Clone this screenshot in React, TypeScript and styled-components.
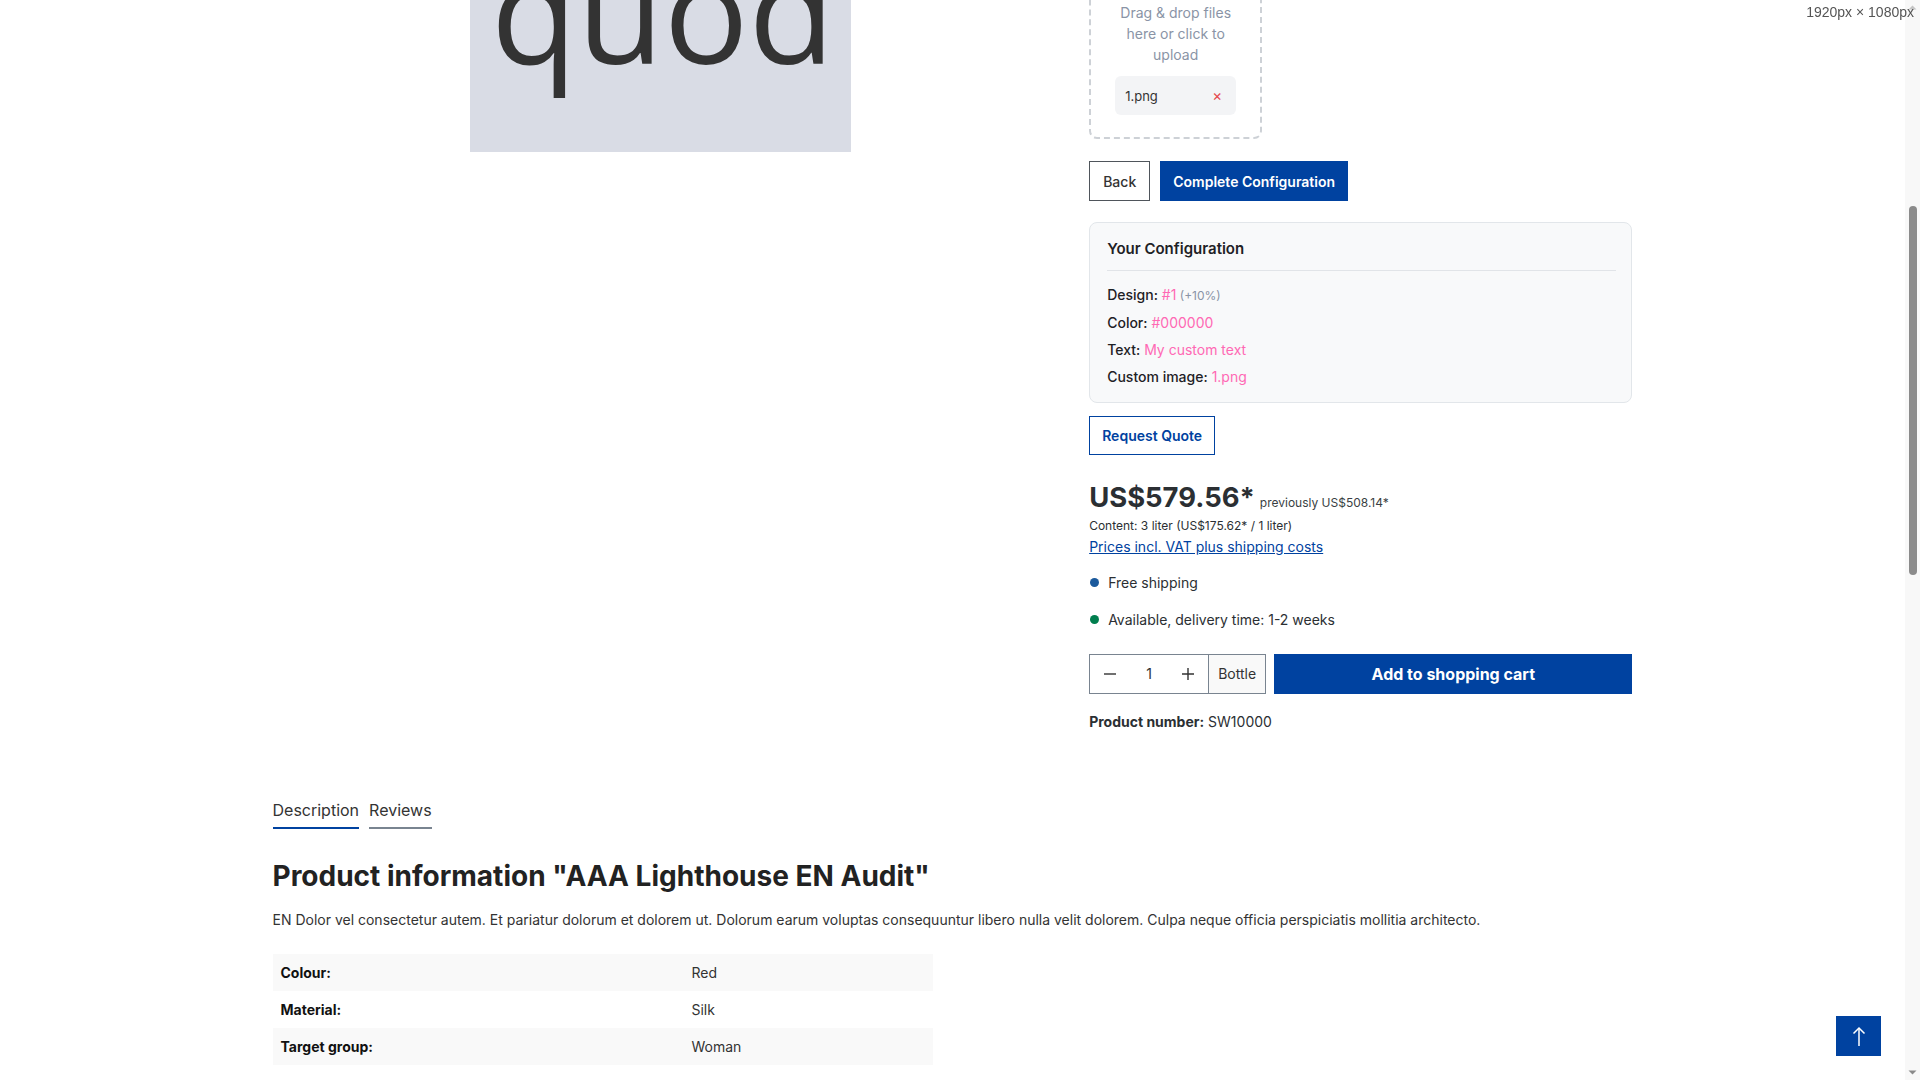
import React from "react";
import styled, { createGlobalStyle } from "styled-components";

const brand = "#0042a0";
const pink = "#ff69b4";
const text = "#2b2f33";

const GlobalStyle = createGlobalStyle`
  html, body {
    margin: 0;
    padding: 0;
    height: 100%;
  }
  body {
    font-family: Inter, "Noto Sans", Arial, sans-serif;
    font-size: 14px;
    color: ${text};
    background: #fff;
    overflow: hidden;
  }
  *, *::before, *::after {
    box-sizing: border-box;
  }
`;

const Viewport = styled.div`
  display: flex;
  height: 100vh;
  overflow: hidden;
`;

const Page = styled.main`
  flex: 1;
  min-width: 0;
  overflow: hidden;
`;

/* the page is scrolled a little past the top of the product block */
const ScrollContent = styled.div`
  margin-top: -72px;
`;

const Container = styled.div`
  max-width: 1400px;
  margin: 0 auto;
  padding: 0 20px;
`;

const ProductRow = styled.div`
  display: flex;
  margin: 0 -20px;
`;

const GalleryColumn = styled.div`
  flex: 0 0 58.3333%;
  padding: 0 20px;
  display: flex;
  justify-content: center;
  align-items: flex-start;
`;

const GalleryImage = styled.div`
  width: 381px;
  height: 224px;
  background: #d9dce5;
  display: flex;
  align-items: flex-end;
  justify-content: center;
  padding-bottom: 72px;
`;

const ImageWord = styled.span`
  font-family: "Open Sans", "Noto Sans", sans-serif;
  font-size: 141px;
  line-height: 1;
  color: #333;
  padding-left: 4px;
`;

const BuyColumn = styled.div`
  flex: 0 0 41.6667%;
  padding: 0 20px;
  display: flex;
  flex-direction: column;
  align-items: flex-start;
`;

const UploadZone = styled.div`
  width: 173px;
  border: 2px dashed #cdd1d6;
  border-radius: 8px;
  padding: 23px 24px 22px;
  display: flex;
  flex-direction: column;
  align-items: center;
`;

const UploadHint = styled.p`
  margin: 13px 0 0;
  font-size: 14px;
  line-height: 21px;
  color: #8a94a6;
  text-align: center;
`;

const FileChip = styled.div`
  margin-top: 11px;
  width: 100%;
  height: 39px;
  padding: 0 10px;
  border-radius: 6px;
  background: #f3f4f6;
  display: flex;
  align-items: center;
  justify-content: space-between;
  font-size: 13px;
  color: #333;
`;

const RemoveFile = styled.span`
  color: #e5484d;
  font-size: 15px;
  line-height: 1;
  padding-right: 4px;
`;

const ActionRow = styled.div`
  margin-top: 22px;
  display: flex;
  gap: 10px;
`;

type ButtonVariant = "outline" | "primary" | "quote";

const Button = styled.button<{ $variant: ButtonVariant }>`
  height: 40px;
  padding: 0 ${({ $variant }) => ($variant === "outline" ? 13 : 12)}px;
  font-family: inherit;
  font-size: 14px;
  font-weight: ${({ $variant }) => ($variant === "outline" ? 500 : 600)};
  border: 1px solid
    ${({ $variant }) => ($variant === "outline" ? "#4f555b" : brand)};
  background: ${({ $variant }) => ($variant === "primary" ? brand : "#fff")};
  color: ${({ $variant }) =>
    $variant === "primary" ? "#fff" : $variant === "quote" ? brand : "#333"};
  cursor: pointer;
`;

const ConfigCard = styled.section`
  margin-top: 21px;
  align-self: stretch;
  border: 1px solid #e2e6ea;
  border-radius: 8px;
  background: #f8f9fa;
  padding: 15px 15px 15px 17px;
`;

const ConfigTitle = styled.h3`
  margin: 0;
  font-size: 15px;
  font-weight: 600;
  line-height: 20px;
  color: #1e2125;
  padding: 1px 0 11px;
  border-bottom: 1px solid #e1e4e8;
`;

const ConfigList = styled.ul`
  list-style: none;
  margin: 13px 0 0;
  padding: 0;
  display: flex;
  flex-direction: column;
  gap: 6px;
`;

const ConfigItem = styled.li`
  font-size: 14px;
  line-height: 21px;
  color: ${pink};

  & > b {
    font-weight: 500;
    color: #1e2125;
  }
`;

const ConfigNote = styled.span`
  font-size: 12px;
  color: #8a94a6;
`;

const QuoteButton = styled(Button)`
  margin-top: 13px;
  height: 39px;
`;

const PriceLine = styled.div`
  margin-top: 26px;
  display: flex;
  align-items: baseline;
  gap: 5px;
`;

const Price = styled.span`
  font-size: 27.4px;
  font-weight: 700;
  line-height: 1.2;
  color: ${text};
`;

const OldPrice = styled.span`
  font-size: 12px;
  color: #3a3f44;
`;

const UnitPrice = styled.div`
  margin-top: 2px;
  font-size: 12px;
  line-height: 20px;
`;

const TaxLink = styled.a`
  font-size: 14px;
  line-height: 21px;
  color: ${brand};
  text-decoration: underline;
`;

const DeliveryList = styled.div`
  margin-top: 15px;
  display: flex;
  flex-direction: column;
  gap: 16px;
`;

const DeliveryItem = styled.div`
  display: flex;
  align-items: center;
  gap: 9px;
  font-size: 14px;
  line-height: 21px;
`;

const Dot = styled.span<{ $color: string }>`
  width: 9px;
  height: 9px;
  border-radius: 50%;
  background: ${({ $color }) => $color};
  margin-left: 1px;
`;

const BuyRow = styled.div`
  margin-top: 24px;
  align-self: stretch;
  display: flex;
  gap: 8px;
`;

const QuantityBox = styled.div`
  display: flex;
  height: 40px;
  border: 1px solid #798490;
`;

const QtyButton = styled.button`
  width: 40px;
  border: 0;
  background: #fff;
  display: flex;
  align-items: center;
  justify-content: center;
  padding: 0;
`;

const QtyValue = styled.span`
  width: 38px;
  display: flex;
  align-items: center;
  justify-content: center;
  font-size: 14px;
`;

const UnitLabel = styled.span`
  width: 57px;
  border-left: 1px solid #798490;
  background: #f9f9f9;
  display: flex;
  align-items: center;
  justify-content: center;
  font-size: 14px;
  color: #333;
`;

const CartButton = styled.button`
  flex: 1;
  height: 40px;
  border: 0;
  background: ${brand};
  color: #fff;
  font-family: inherit;
  font-size: 16px;
  font-weight: 700;
`;

const ProductNumber = styled.div`
  margin-top: 17px;
  font-size: 14px;
  line-height: 21px;

  & > b {
    font-weight: 700;
  }
`;

const TabsSection = styled.section`
  margin-top: 66px;
`;

const TabList = styled.div`
  display: flex;
  gap: 10px;
`;

const Tab = styled.span<{ $active?: boolean }>`
  font-size: 16px;
  line-height: 24px;
  color: #333;
  padding-bottom: 5px;
  border-bottom: 2px solid ${({ $active }) => ($active ? brand : "#798490")};
`;

const TabTitle = styled.h2`
  margin: 31px 0 0;
  font-size: 28px;
  font-weight: 700;
  line-height: 1.2;
  color: #222;
`;

const DescriptionText = styled.p`
  margin: 16px 0 0;
  font-size: 14px;
  line-height: 21px;
  color: #333;
`;

const PropertyTable = styled.div`
  margin-top: 24px;
  width: 660px;
`;

const PropertyRow = styled.div<{ $striped: boolean }>`
  display: grid;
  grid-template-columns: 411px 1fr;
  height: 37px;
  align-items: center;
  background: ${({ $striped }) => ($striped ? "#f9f9f9" : "#fff")};
  font-size: 14px;
`;

const PropertyLabel = styled.span`
  padding-left: 8px;
  font-weight: 700;
  color: #111;
`;

const PropertyValue = styled.span`
  padding-left: 8px;
  color: #333;
`;

const ScrollTrack = styled.div`
  width: 15px;
  flex: 0 0 15px;
  background: #f8f8f8;
  display: flex;
  flex-direction: column;
  align-items: center;
`;

const ScrollThumb = styled.div`
  margin-top: 192px;
  width: 8px;
  height: 369px;
  border-radius: 4px;
  background: #8b8b8b;
`;

const ScrollSpacer = styled.div`
  flex: 1;
`;

const BackToTop = styled.button`
  position: fixed;
  right: 39px;
  bottom: 24px;
  width: 45px;
  height: 40px;
  border: 0;
  background: ${brand};
  display: flex;
  align-items: center;
  justify-content: center;
  padding: 0;
`;

const SizeLabel = styled.span`
  position: fixed;
  top: 4px;
  right: 6px;
  font-family: "Liberation Sans", Arial, sans-serif;
  font-size: 14px;
  color: #555;
`;

const configItems = [
  { label: "Design", value: "#1", note: "(+10%)" },
  { label: "Color", value: "#000000" },
  { label: "Text", value: "My custom text" },
  { label: "Custom image", value: "1.png" },
];

const properties = [
  { label: "Colour:", value: "Red" },
  { label: "Material:", value: "Silk" },
  { label: "Target group:", value: "Woman" },
];

const UploadIcon = () => (
  <svg width="36" height="36" viewBox="0 0 24 24" fill="none" stroke="#8a94a6" strokeWidth="1.5" strokeLinecap="round" strokeLinejoin="round">
    <path d="M7 18a4.5 4.5 0 0 1-.5-9A6 6 0 0 1 18 8a4 4 0 0 1 0 10" />
    <path d="M12 12v8M9 15l3-3 3 3" />
  </svg>
);

const MinusIcon = () => (
  <svg width="14" height="14" viewBox="0 0 14 14">
    <path d="M1 7h12" stroke="#333" strokeWidth="1.4" />
  </svg>
);

const PlusIcon = () => (
  <svg width="14" height="14" viewBox="0 0 14 14">
    <path d="M1 7h12M7 1v12" stroke="#333" strokeWidth="1.4" />
  </svg>
);

const ArrowUpIcon = () => (
  <svg width="14" height="21" viewBox="0 0 14 21" fill="none" stroke="#fff" strokeWidth="1.5">
    <path d="M7 20V2" />
    <path d="M1.5 7.5 7 2l5.5 5.5" />
  </svg>
);

const ScrollArrow = ({ up }: { up?: boolean }) => (
  <svg width="9" height="14" viewBox="0 0 9 14">
    {up ? (
      <path d="M0.5 9.5 4.5 5.5 8.5 9.5Z" fill="#c4c4c4" />
    ) : (
      <path d="M0.5 4.5 4.5 8.5 8.5 4.5Z" fill="#8a8a8a" />
    )}
  </svg>
);

export default function App() {
  return (
    <>
      <GlobalStyle />
      <Viewport>
        <Page>
          <ScrollContent>
            <Container>
              <ProductRow>
                <GalleryColumn>
                  <GalleryImage>
                    <ImageWord>quod</ImageWord>
                  </GalleryImage>
                </GalleryColumn>

                <BuyColumn>
                  <UploadZone>
                    <UploadIcon />
                    <UploadHint>Drag &amp; drop files here or click to upload</UploadHint>
                    <FileChip>
                      <span>1.png</span>
                      <RemoveFile>×</RemoveFile>
                    </FileChip>
                  </UploadZone>

                  <ActionRow>
                    <Button $variant="outline">Back</Button>
                    <Button $variant="primary">Complete Configuration</Button>
                  </ActionRow>

                  <ConfigCard>
                    <ConfigTitle>Your Configuration</ConfigTitle>
                    <ConfigList>
                      {configItems.map((item) => (
                        <ConfigItem key={item.label}>
                          <b>{item.label}:</b> {item.value}
                          {item.note && <ConfigNote> {item.note}</ConfigNote>}
                        </ConfigItem>
                      ))}
                    </ConfigList>
                  </ConfigCard>

                  <QuoteButton $variant="quote">Request Quote</QuoteButton>

                  <PriceLine>
                    <Price>US$579.56*</Price>
                    <OldPrice>previously US$508.14*</OldPrice>
                  </PriceLine>
                  <UnitPrice>Content: 3 liter (US$175.62* / 1 liter)</UnitPrice>
                  <TaxLink href="#">Prices incl. VAT plus shipping costs</TaxLink>

                  <DeliveryList>
                    <DeliveryItem>
                      <Dot $color="#1b5a9c" />
                      Free shipping
                    </DeliveryItem>
                    <DeliveryItem>
                      <Dot $color="#007e4e" />
                      Available, delivery time: 1-2 weeks
                    </DeliveryItem>
                  </DeliveryList>

                  <BuyRow>
                    <QuantityBox>
                      <QtyButton aria-label="Decrease">
                        <MinusIcon />
                      </QtyButton>
                      <QtyValue>1</QtyValue>
                      <QtyButton aria-label="Increase">
                        <PlusIcon />
                      </QtyButton>
                      <UnitLabel>Bottle</UnitLabel>
                    </QuantityBox>
                    <CartButton>Add to shopping cart</CartButton>
                  </BuyRow>

                  <ProductNumber>
                    <b>Product number:</b> SW10000
                  </ProductNumber>
                </BuyColumn>
              </ProductRow>

              <TabsSection>
                <TabList>
                  <Tab $active>Description</Tab>
                  <Tab>Reviews</Tab>
                </TabList>
                <TabTitle>Product information "AAA Lighthouse EN Audit"</TabTitle>
                <DescriptionText>
                  EN Dolor vel consectetur autem. Et pariatur dolorum et dolorem ut. Dolorum earum voluptas
                  consequuntur libero nulla velit dolorem. Culpa neque officia perspiciatis mollitia architecto.
                </DescriptionText>
                <PropertyTable>
                  {properties.map((p, i) => (
                    <PropertyRow key={p.label} $striped={i % 2 === 0}>
                      <PropertyLabel>{p.label}</PropertyLabel>
                      <PropertyValue>{p.value}</PropertyValue>
                    </PropertyRow>
                  ))}
                </PropertyTable>
              </TabsSection>
            </Container>
          </ScrollContent>
        </Page>

        <ScrollTrack>
          <ScrollArrow up />
          <ScrollThumb />
          <ScrollSpacer />
          <ScrollArrow />
        </ScrollTrack>
      </Viewport>

      <SizeLabel>1920px × 1080px</SizeLabel>
      <BackToTop aria-label="Back to top">
        <ArrowUpIcon />
      </BackToTop>
    </>
  );
}
